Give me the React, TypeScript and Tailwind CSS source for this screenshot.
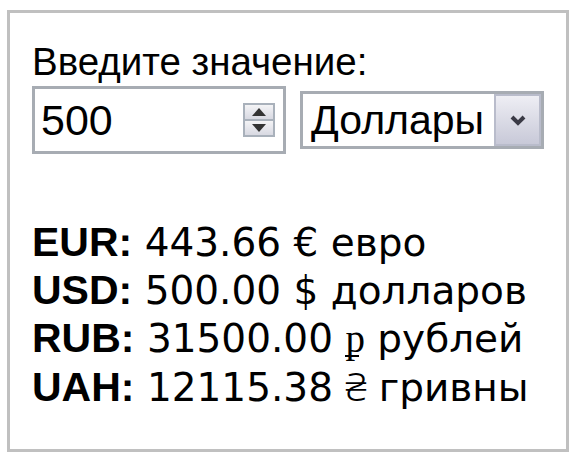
import React from 'react'

const rates = [
  { code: 'EUR', value: '443.66', sign: '€', name: 'евро' },
  { code: 'USD', value: '500.00', sign: '$', name: 'долларов' },
  { code: 'RUB', value: '31500.00', sign: 'р', name: 'рублей' },
  { code: 'UAH', value: '12115.38', sign: '₴', name: 'гривны' },
]

function Spinner() {
  return (
    <div className="flex h-[34px] w-[32px] flex-col">
      <div className="flex h-[17px] items-center justify-center border-2 border-b border-[#a9b1bb] bg-gradient-to-b from-[#f4f4f6] to-[#d8d9e2]">
        <svg width="14" height="8" viewBox="0 0 14 8">
          <path d="M7 0 L14 8 L0 8 Z" fill="#333" />
        </svg>
      </div>
      <div className="flex h-[17px] items-center justify-center border-2 border-t border-[#a9b1bb] bg-gradient-to-b from-[#f4f4f6] to-[#d8d9e2]">
        <svg width="14" height="8" viewBox="0 0 14 8">
          <path d="M0 0 L14 0 L7 8 Z" fill="#333" />
        </svg>
      </div>
    </div>
  )
}

function RubleSign() {
  return (
    <span className="relative font-['Liberation_Serif',serif]">
      р
      <span className="absolute bottom-[3px] left-[0px] h-[2px] w-[14px] bg-black" />
    </span>
  )
}

export default function App() {
  return (
    <div className="h-[459px] w-[576px] overflow-hidden bg-white pl-[7px] pt-[10px] font-['Liberation_Sans',Arial,sans-serif] text-black">
      <div className="h-[442px] w-[562px] border-[3px] border-[#c0c0c0] pl-[22px] pt-[26px]">
        <div className="text-[38.5px] leading-[46px]">Введите значение:</div>
        <div className="mt-[1px] flex items-center gap-[14px]">
          <div className="flex h-[68px] w-[254px] items-center border-[3px] border-[#a7acb3] bg-white pl-[6px] pr-[8px]">
            <span className="flex-1 text-[43px] leading-none">500</span>
            <Spinner />
          </div>
          <div className="flex h-[58px] w-[244px] items-center border-[3px] border-[#a7acb3] bg-white pl-[8px]">
            <span className="flex-1 text-[41px] leading-none">Доллары</span>
            <div className="flex h-full w-[47px] items-center justify-center border-2 border-[#b9bccb] bg-gradient-to-b from-[#eeeef4] to-[#c8c9d8]">
              <svg width="16" height="11" viewBox="0 0 16 11">
                <path d="M2 2 L8 8 L14 2" stroke="#3a3a46" strokeWidth="4" fill="none" />
              </svg>
            </div>
          </div>
        </div>
        <div className="mt-[64px] flex flex-col text-[40px]">
          {rates.map((r) => (
            <div key={r.code} className="h-[48px] whitespace-nowrap leading-[48px]">
              <b className="text-[41px]">{r.code}:</b>
              <span className="font-['DejaVu_Sans',sans-serif] text-[39px]">
                {' '}
                {r.value}{' '}
                {r.code === 'RUB' ? (
                  <RubleSign />
                ) : r.code === 'UAH' ? (
                  <span className="font-['Noto_Sans',sans-serif] font-light">{r.sign}</span>
                ) : (
                  r.sign
                )}{' '}
                {r.name}
              </span>
            </div>
          ))}
        </div>
      </div>
    </div>
  )
}
